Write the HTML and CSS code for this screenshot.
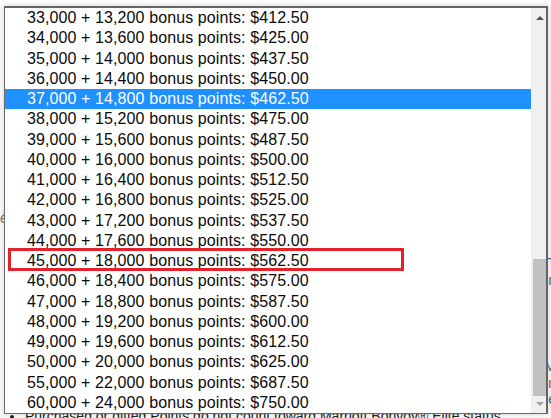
FILE: index.html
```html
<!DOCTYPE html>
<html>
<head>
<meta charset="utf-8">
<link rel="stylesheet" href="styles.css">
</head>
<body>
<div class="page">
  <div class="line"><span class="l grey">é</span><span class="r"></span></div>
  <div class="line push"><span class="l"></span><span class="r purple">:</span></div>
  <div class="line"><span class="l"></span><span class="r blue">T</span></div>
  <div class="line"><span class="l"></span><span class="r blue">in</span></div>
  <div class="line gap"><span class="l"></span><span class="r blue">M</span></div>
  <div class="line"><span class="l"></span><span class="r brown">n</span></div>
  <div class="line"><span class="l"></span><span class="r blue">e</span></div>
  <ul class="notes">
    <li>Purchased or gifted Points do not count toward Marriott Bonvoy® Elite status.</li>
  </ul>
</div>

<div class="dropdown">
  <ul class="options">
    <li>33,000 + 13,200 bonus points: $412.50</li>
    <li>34,000 + 13,600 bonus points: $425.00</li>
    <li>35,000 + 14,000 bonus points: $437.50</li>
    <li>36,000 + 14,400 bonus points: $450.00</li>
    <li class="selected">37,000 + 14,800 bonus points: $462.50</li>
    <li>38,000 + 15,200 bonus points: $475.00</li>
    <li>39,000 + 15,600 bonus points: $487.50</li>
    <li>40,000 + 16,000 bonus points: $500.00</li>
    <li>41,000 + 16,400 bonus points: $512.50</li>
    <li>42,000 + 16,800 bonus points: $525.00</li>
    <li>43,000 + 17,200 bonus points: $537.50</li>
    <li>44,000 + 17,600 bonus points: $550.00</li>
    <li>45,000 + 18,000 bonus points: $562.50</li>
    <li>46,000 + 18,400 bonus points: $575.00</li>
    <li>47,000 + 18,800 bonus points: $587.50</li>
    <li>48,000 + 19,200 bonus points: $600.00</li>
    <li>49,000 + 19,600 bonus points: $612.50</li>
    <li>50,000 + 20,000 bonus points: $625.00</li>
    <li>55,000 + 22,000 bonus points: $687.50</li>
    <li>60,000 + 24,000 bonus points: $750.00</li>
  </ul>
  <div class="scrollbar">
    <div class="arrow up"></div>
    <div class="track"><div class="thumb"></div></div>
    <div class="arrow down"></div>
  </div>
  <div class="highlight-box"></div>
</div>
</body>
</html>
```

FILE: styles.css
```css
html, body {
  margin: 0;
  padding: 0;
  background: #ffffff;
  overflow: hidden;
  width: 551px;
  height: 418px;
  font-family: "Liberation Sans", Arial, sans-serif;
}

.page {
  padding-top: 210px;
  width: 560px;
  font-size: 14px;
  color: #333;
}

.line {
  display: flex;
  justify-content: space-between;
  height: 16.5px;
  line-height: 16px;
  padding-right: 4px;
}
.line.push { margin-top: 12px; }
.line.gap { margin-top: 70px; }

.grey { color: #777; }
.purple { color: #7a3a9a; }
.blue { color: #1a7ab8; }
.brown { color: #b06a2a; }

.notes {
  margin: 0;
  padding: 0 0 0 25px;
  font-size: 14px;
  line-height: 16px;
  color: #222;
}

.dropdown {
  position: absolute;
  left: 4px;
  top: 6px;
  width: 541px;
  height: 405px;
  display: flex;
  background: #ffffff;
  border: 1px solid #6a6a6a;
  border-top: 2px solid #646464;
  border-right: 2px solid #646464;
  box-shadow: 0 0 5px 2px rgba(0, 0, 0, 0.12);
}

.options {
  list-style: none;
  margin: 0;
  padding: 0;
  flex: 1;
  font-size: 16px;
  letter-spacing: 0.1px;
  color: #0a0a0a;
}

.options li {
  height: 20.25px;
  line-height: 20.25px;
  padding-left: 22px;
  white-space: nowrap;
}

.options li.selected {
  background: #1e90ff;
  color: #ffffff;
}

.scrollbar {
  width: 15px;
  background: #f0f0f0;
  display: flex;
  flex-direction: column;
}

.arrow {
  height: 17px;
  display: flex;
  align-items: center;
  justify-content: center;
}
.arrow.up::before {
  content: "";
  border-left: 4px solid transparent;
  border-right: 4px solid transparent;
  border-bottom: 4px solid #505050;
  margin-left: 2px;
  margin-top: 2px;
}
.arrow.down::before {
  content: "";
  border-left: 4px solid transparent;
  border-right: 4px solid transparent;
  border-top: 4px solid #a3a3a3;
  margin-left: 2px;
  margin-top: -2px;
}

.track {
  flex: 1;
  display: flex;
  flex-direction: column;
  justify-content: flex-end;
  padding: 0 0 0 2px;
}

.thumb {
  height: 137px;
  background: #c1c1c1;
}

.highlight-box {
  position: absolute;
  left: 3px;
  top: 240px;
  width: 390px;
  height: 17px;
  border: 3px solid #e3222b;
}
```
